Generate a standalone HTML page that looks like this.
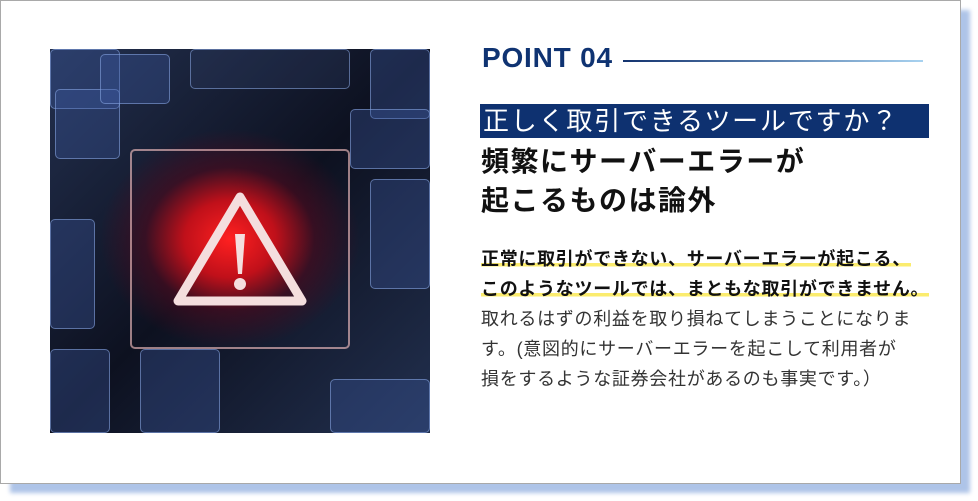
<!DOCTYPE html>
<html><head><meta charset="utf-8"><style>
*{margin:0;padding:0;box-sizing:border-box}
body{width:978px;height:501px;background:#fff;position:relative;overflow:hidden;font-family:"Liberation Sans","Noto Sans CJK JP",sans-serif}
.shadow{position:absolute;left:10px;top:10px;width:960px;height:483px;background:#aec4e8;filter:blur(2px)}
.card{position:absolute;left:0;top:0;width:961px;height:484px;background:#fff;border:1px solid #a9a9a9}
.img{position:absolute;left:50px;top:49px;width:380px;height:384px;overflow:hidden;
background:radial-gradient(ellipse 130px 110px at 180px 190px,#ff2020 0%,#c0101a 35%,rgba(80,10,30,.6) 65%,rgba(0,0,0,0) 100%),linear-gradient(135deg,#23304f,#0d1120 50%,#22304f)}
.t{position:absolute;border:1px solid rgba(140,170,230,.55);border-radius:5px;background:rgba(60,90,160,.35)}
.pt{position:absolute;left:482px;top:42px;font-size:28px;letter-spacing:0.8px;font-weight:bold;color:#0f3372}
.ln{position:absolute;left:623px;top:60px;width:300px;height:2px;background:linear-gradient(90deg,#13336f,#a8d2f0)}
.ban{position:absolute;left:480px;top:104px;width:449px;height:34px;background:#0e3170;color:#fff;font-size:26px;letter-spacing:1.8px;line-height:34px;padding-left:3px;white-space:nowrap}
.h{position:absolute;left:481px;font-size:28px;letter-spacing:1.5px;font-weight:bold;color:#111;white-space:nowrap}
.b{position:absolute;left:481px;font-size:18px;letter-spacing:0.7px;color:#333;white-space:nowrap;line-height:30px}
.b b{color:#111;background:linear-gradient(transparent 70%,#fbec6e 70%,#fbec6e 88%,transparent 88%)}
</style></head><body>
<div class="shadow"></div>
<div class="card"></div>
<div class="img">
<div class="t" style="left:0;top:0;width:70px;height:60px"></div>
<div class="t" style="left:5px;top:40px;width:65px;height:70px"></div>
<div class="t" style="left:50px;top:5px;width:70px;height:50px"></div>
<div class="t" style="left:0;top:170px;width:45px;height:110px"></div>
<div class="t" style="left:320px;top:0;width:60px;height:70px"></div>
<div class="t" style="left:300px;top:60px;width:80px;height:60px"></div>
<div class="t" style="left:320px;top:130px;width:60px;height:110px"></div>
<div class="t" style="left:0;top:300px;width:60px;height:84px"></div>
<div class="t" style="left:90px;top:300px;width:80px;height:84px"></div>
<div class="t" style="left:280px;top:330px;width:100px;height:54px"></div>
<div class="t" style="left:140px;top:0;width:160px;height:40px;background:rgba(60,80,130,.2)"></div>
<div class="t" style="left:80px;top:100px;width:220px;height:200px;background:transparent;border:2px solid rgba(255,200,200,.6)"></div>
<svg style="position:absolute;left:120px;top:140px" width="140" height="120" viewBox="0 0 140 120"><path d="M70 8 L132 112 L8 112 Z" fill="none" stroke="#f4dede" stroke-width="9" stroke-linejoin="round"/><path d="M65 45 L75 45 L72 85 L68 85 Z" fill="#f4dede"/><circle cx="70" cy="95" r="6" fill="#f4dede"/></svg>
</div>
<div class="pt">POINT 04</div>
<div class="ln"></div>
<div class="ban">正しく取引できるツールですか？</div>
<div class="h" style="top:140px">頻繁にサーバーエラーが</div>
<div class="h" style="top:179px">起こるものは論外</div>
<div class="b" style="top:244px"><b>正常に取引ができない、サーバーエラーが起こる、</b></div>
<div class="b" style="top:274px"><b>このようなツールでは、まともな取引ができません。</b></div>
<div class="b" style="top:304px">取れるはずの利益を取り損ねてしまうことになりま</div>
<div class="b" style="top:334px">す。(意図的にサーバーエラーを起こして利用者が</div>
<div class="b" style="top:364px">損をするような証券会社があるのも事実です。）</div>
</body></html>
